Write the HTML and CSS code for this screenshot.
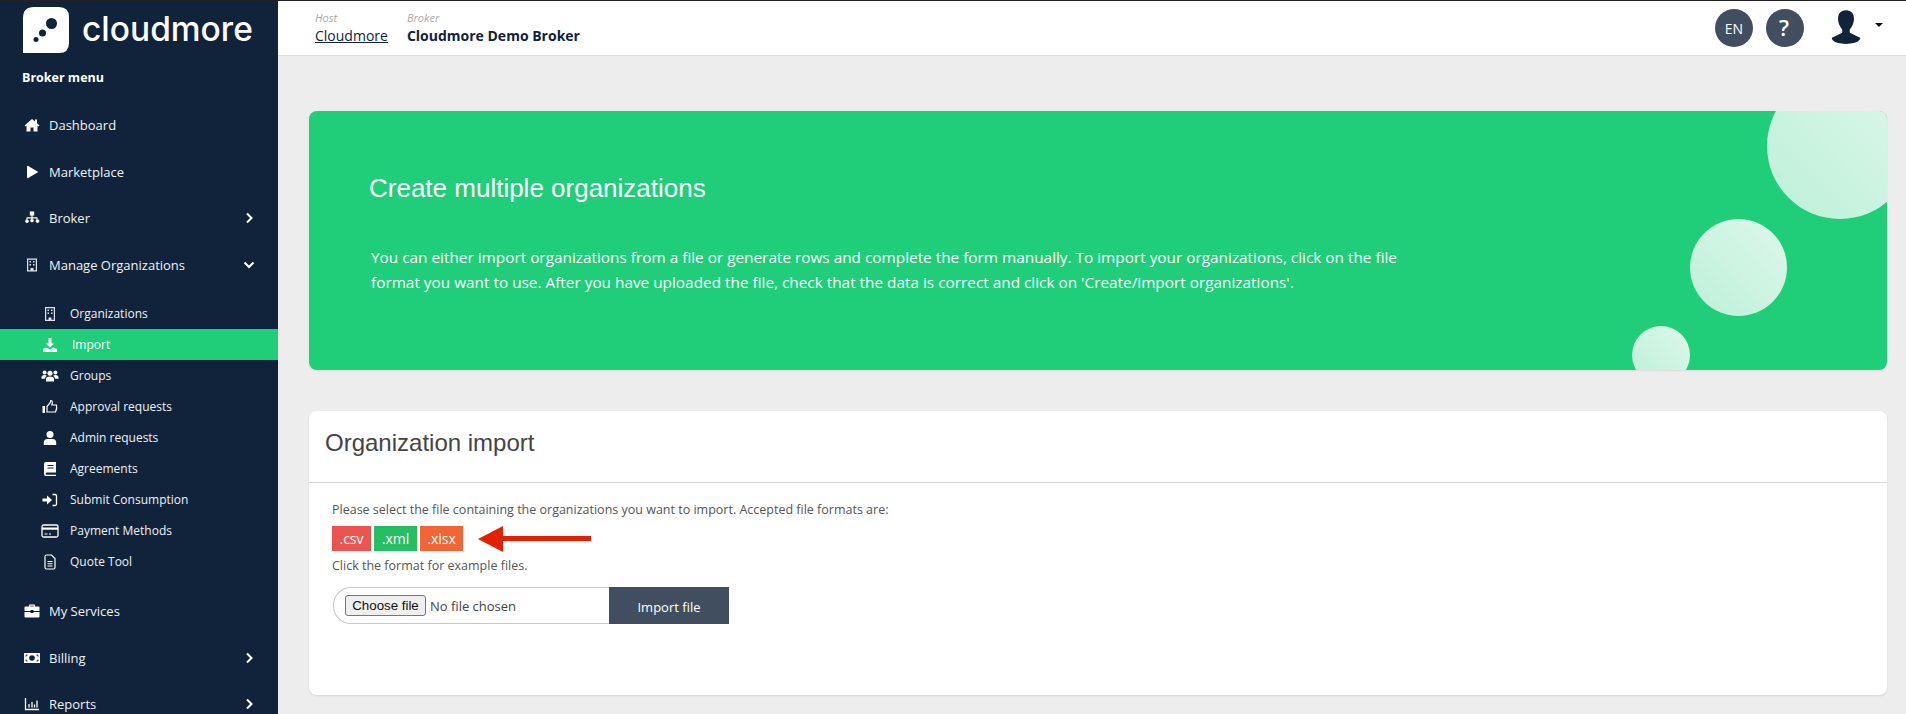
FILE: index.html
```html
<!DOCTYPE html>
<html lang="en">
<head>
<meta charset="utf-8">
<title>Import</title>
<link rel="stylesheet" href="styles.css">
</head>
<body>
<div class="app">
  <aside class="sidebar">
    <div class="brand">
      <svg class="logo-mark" viewBox="0 0 46 46"><path d="M11 0H36Q46 0 46 10V36Q46 46 36 46H0V11Q0 0 11 0Z" fill="#fff"/><circle cx="28.500" cy="16.500" r="5.500" fill="#10233a"/><circle cx="19.500" cy="26" r="3.500" fill="#10233a"/><circle cx="13" cy="32.500" r="2.500" fill="#10233a"/></svg>
      <span class="logo-text">cloudmore</span>
    </div>
    <div class="menu-title">Broker menu</div>
    <nav class="menu">
      <a class="item"><svg class="ic" viewBox="0 0 16 16"><path d="M8 2 0.500 8.500 1.500 9.500 2.500 8.700V14.500H6.500V10.500H9.500V14.500H13.500V8.700L14.500 9.500 15.500 8.500 13 6.300V2.500H11V4.600Z" fill="#fff"/></svg><span>Dashboard</span></a>
      <a class="item"><svg class="ic" viewBox="0 0 16 16"><path d="M3 2.500V13.500a.8.8 0 0 0 1.200.6L13.500 8.600a.7.7 0 0 0 0-1.200L4.200 1.900A.8.8 0 0 0 3 2.500Z" fill="#fff"/></svg><span>Marketplace</span></a>
      <a class="item"><svg class="ic" viewBox="0 0 16 16"><path d="M5.800 1.500H10.200V5.500H8.600V7.300H13.500V9.500H14.500A1.800 1.800 0 1 1 12.500 9.500V8.500H8.600V9.500H9.500A1.800 1.800 0 1 1 6.500 9.500H7.400V8.500H3.500V9.500A1.800 1.800 0 1 1 2.500 9.500V7.300H7.400V5.500H5.800Z" fill="#fff"/></svg><span>Broker</span><svg class="chev" viewBox="0 0 10 12"><path d="M3 1.500 7.500 6 3 10.500" fill="none" stroke="#fff" stroke-width="2"/></svg></a>
      <a class="item"><svg class="ic" viewBox="0 0 16 16"><path d="M3 1.500H13V14.500H3ZM4.200 2.700V13.300H6.500V11H9.500V13.300H11.800V2.700ZM5.500 4H7V5.500H5.500ZM9 4H10.500V5.500H9ZM5.500 7H7V8.500H5.500ZM9 7H10.500V8.500H9Z" fill="#dfe4ea" fill-rule="evenodd"/></svg><span>Manage Organizations</span><svg class="chev" viewBox="0 0 12 12"><path d="M1.500 3.500 6 8l4.500-4.500" fill="none" stroke="#fff" stroke-width="2"/></svg></a>
    </nav>
    <ul class="submenu">
      <li class="sub"><svg class="sic" viewBox="0 0 16 16"><path d="M3 1H13V15H3ZM4.200 2.200V13.800H6.500V11.500H9.500V13.800H11.800V2.200ZM5.500 3.500H7V5H5.500ZM9 3.500H10.500V5H9ZM5.500 6.500H7V8H5.500ZM9 6.500H10.500V8H9Z" fill="#dfe4ea" fill-rule="evenodd"/></svg><span>Organizations</span></li>
      <li class="sub active"><svg class="sic" viewBox="0 0 16 16"><path d="M6.500 1H9.500V6.500H12L8 10.500 4 6.500H6.500ZM1 12 4.500 10.500 8 12.500 11.500 10.500 15 12V15H1Z" fill="#fff"/></svg><span>Import</span></li>
      <li class="sub"><svg class="sic wide" viewBox="0 0 20 14"><circle cx="4" cy="3" r="2.200" fill="#fff"/><circle cx="16" cy="3" r="2.200" fill="#fff"/><circle cx="10" cy="4" r="2.800" fill="#fff"/><path d="M0.500 9Q0.500 6 4 6 6 6 6.500 7 4.500 8 4.500 10H0.500ZM19.500 9Q19.500 6 16 6 14 6 13.500 7 15.500 8 15.500 10H19.500ZM5.500 13V10.500Q5.500 7.500 10 7.500 14.500 7.500 14.500 10.500V13Z" fill="#fff"/></svg><span>Groups</span></li>
      <li class="sub"><svg class="sic" viewBox="0 0 16 16"><path d="M0.500 7H3V14H0.500Z" fill="#fff"/><path d="M5 13V7.500L8 4 8.700 1.500Q10.500 1.500 10.300 3.800L9.800 6H14.500Q15.200 9.500 13.500 13Z" fill="none" stroke="#fff" stroke-width="1.200"/></svg><span>Approval requests</span></li>
      <li class="sub"><svg class="sic" viewBox="0 0 16 16"><circle cx="8" cy="4.500" r="3.500" fill="#fff"/><path d="M1.800 15V12.500Q1.800 9 5.500 9H10.500Q14.200 9 14.200 12.500V15Z" fill="#fff"/></svg><span>Admin requests</span></li>
      <li class="sub"><svg class="sic" viewBox="0 0 16 16"><path d="M4 1H14V11.500H4.500A1.200 1.200 0 0 0 4.500 13.800H14V15H4Q2 15 2 13V3Q2 1 4 1ZM5.500 4V5H11.500V4ZM5.500 6.500V7.500H11.500V6.500Z" fill="#fff" fill-rule="evenodd"/></svg><span>Agreements</span></li>
      <li class="sub"><svg class="sic" viewBox="0 0 16 16"><path d="M0.500 6.500H5V3.500L10 8 5 12.500V9.500H0.500Z" fill="#fff"/><path d="M10.500 2.500H13Q14.500 2.500 14.500 4V12Q14.500 13.500 13 13.500H10.500" fill="none" stroke="#fff" stroke-width="1.300"/></svg><span>Submit Consumption</span></li>
      <li class="sub"><svg class="sic wide" viewBox="0 0 18 14"><rect x="1" y="1" width="16" height="12" rx="1.500" fill="none" stroke="#fff" stroke-width="1.300"/><rect x="1" y="3.500" width="16" height="2.200" fill="#fff"/><path d="M3.500 10H6.500M8 10H10" stroke="#fff" stroke-width="1"/></svg><span>Payment Methods</span></li>
      <li class="sub"><svg class="sic" viewBox="0 0 16 16"><path d="M3 2.500Q3 1 4.500 1H9.500L13 4.500V13.500Q13 15 11.500 15H4.500Q3 15 3 13.500Z" fill="none" stroke="#fff" stroke-width="1.200"/><path d="M5.500 7.500H10.500M5.500 9.800H10.500M5.500 12H10.500" stroke="#fff" stroke-width="1.100"/></svg><span>Quote Tool</span></li>
    </ul>
    <nav class="menu">
      <a class="item"><svg class="ic" viewBox="0 0 16 16"><path d="M5 3.500V2.500Q5 1.500 6 1.500H10Q11 1.500 11 2.500V3.500H14.500Q15.500 3.500 15.500 4.500V8H9.500V7H6.500V8H0.500V4.500Q0.500 3.500 1.500 3.500ZM6.300 3.500H9.700V2.700H6.300ZM0.500 9H6.500V10H9.500V9H15.500V13.500Q15.500 14.500 14.500 14.500H1.500Q0.500 14.500 0.500 13.500Z" fill="#fff" fill-rule="evenodd"/></svg><span>My Services</span></a>
      <a class="item"><svg class="ic" viewBox="0 0 16 12"><path d="M0 1H16V11H0ZM2.500 2.500 1.500 3.500V4.500H2.500V3.500H3.500V2.500ZM12.500 2.500V3.500H13.500V4.500H14.500V3.500L13.500 2.500ZM1.500 7.500V8.500L2.500 9.500H3.500V8.500H2.500V7.500ZM13.500 7.500V8.500H12.500V9.500H13.500L14.500 8.500V7.500ZM8 3.200A2.800 2.800 0 1 0 8 8.800 2.800 2.800 0 1 0 8 3.200Z" fill="#fff" fill-rule="evenodd"/></svg><span>Billing</span><svg class="chev" viewBox="0 0 10 12"><path d="M3 1.500 7.500 6 3 10.500" fill="none" stroke="#fff" stroke-width="2"/></svg></a>
      <a class="item"><svg class="ic" viewBox="0 0 16 16"><path d="M1.500 2V13.500H15" fill="none" stroke="#fff" stroke-width="1.300"/><path d="M5 8V11.500M8 6V11.500M10.500 8.500V11.500M13 4.500V11.500" stroke="#fff" stroke-width="1.300"/></svg><span>Reports</span><svg class="chev" viewBox="0 0 10 12"><path d="M3 1.500 7.500 6 3 10.500" fill="none" stroke="#fff" stroke-width="2"/></svg></a>
    </nav>
  </aside>
  <div class="main">
    <header class="topbar">
      <div class="crumb"><em>Host</em><a class="crumb-link">Cloudmore</a></div>
      <div class="crumb"><em>Broker</em><strong>Cloudmore Demo Broker</strong></div>
      <div class="top-actions">
        <span class="round">EN</span>
        <span class="round q">?</span>
        <span class="user"><svg class="avatar" viewBox="0 0 32 38"><path d="M16 0C10 0 7.500 4 7.500 9.500 7.500 14 9.500 18 12 20.500V24L1 29.500C0 30.500 2.500 36 16 36S32 30.500 31 29.500L20 24V20.500C22.500 18 24.500 14 24.500 9.500 24.500 4 22 0 16 0Z" fill="#10233a"/></svg><i class="caret"></i></span>
      </div>
    </header>
    <main class="content">
      <section class="banner">
        <h1>Create multiple organizations</h1>
        <p>You can either import organizations from a file or generate rows and complete the form manually. To import your organizations, click on the file format you want to use. After you have uploaded the file, check that the data is correct and click on 'Create/import organizations'.</p>
        <span class="bubble b1"></span>
        <span class="bubble b2"></span>
        <span class="bubble b3"></span>
      </section>
      <section class="card">
        <h2>Organization import</h2>
        <div class="card-body">
          <p>Please select the file containing the organizations you want to import. Accepted file formats are:</p>
          <div class="formats">
            <a class="fmt csv">.csv</a><a class="fmt xml">.xml</a><a class="fmt xlsx">.xlsx</a>
            <svg class="arrow" viewBox="0 0 113 26"><path d="M0 13 25 0V10H113V15H25V26Z" fill="#e02200"/></svg>
          </div>
          <p>Click the format for example files.</p>
          <div class="upload">
            <div class="file-box"><button class="file-btn">Choose file</button><span class="file-none">No file chosen</span></div>
            <button class="import-btn">Import file</button>
          </div>
        </div>
      </section>
    </main>
  </div>
</div>
</body>
</html>
```
FILE: styles.css
```css
* { box-sizing: border-box; }
html, body { margin: 0; height: 714px; overflow: hidden; }
body { font-family: "Open Sans", sans-serif; background: #ededed; color: #10233a; }
.app { display: flex; height: 714px; border-top: 1px solid #222; }
.sidebar { width: 278px; flex: none; background: #10233a; color: #fff; overflow: hidden; }
.brand { display: flex; align-items: center; height: 54px; padding-left: 23px; gap: 13px; }
.logo-mark { width: 46px; height: 46px; margin-top: 3px; }
.logo-text { font-family: Inter, sans-serif; font-size: 33.500px; font-weight: 500; margin-top: 1px; }
.menu-title { font-size: 12.500px; font-weight: 700; padding: 14px 0 0 22px; line-height: 18px; height: 47px; }
.menu { display: flex; flex-direction: column; }
.item { display: flex; align-items: center; height: 46.500px; padding: 0 23px 0 24px; font-size: 13px; font-weight: 500; color: #f0f2f5; }
.ic { width: 16px; height: 16px; margin-right: 9px; flex: none; }
.chev { width: 12px; height: 12px; margin-left: auto; }
.submenu { list-style: none; margin: 10px 0 11px; padding: 0; }
.sub { display: flex; align-items: center; height: 31px; padding-left: 42px; font-size: 12px; font-weight: 500; color: #eef1f4; }
.sub .sic { width: 16px; height: 16px; margin-right: 12px; flex: none; }
.sub .sic.wide { width: 18px; margin-left: -1px; margin-right: 11px; }
.sub.active { background: #20ce7a; color: #fff; }
.sub.active .sic { margin-right: 14px; }
.main { flex: 1; min-width: 0; display: flex; flex-direction: column; }
.topbar { height: 55px; background: #fff; border-bottom: 1px solid #ddd; display: flex; align-items: flex-start; padding-left: 37px; gap: 19px; flex: none; }
.crumb { display: flex; flex-direction: column; padding-top: 9px; }
.crumb em { font-size: 11px; line-height: 15px; color: #aaa; }
.crumb-link { font-size: 14px; line-height: 22px; text-decoration: underline; color: #10233a; }
.crumb strong { font-size: 14px; line-height: 22px; font-weight: 700; }
.top-actions { margin-left: auto; display: flex; align-items: center; gap: 13px; height: 54px; padding-right: 23px; }
.round { width: 38px; height: 38px; border-radius: 50%; background: #414e60; color: #fff; display: flex; align-items: center; justify-content: center; font-size: 14px; font-weight: 500; }
.round.q { font-size: 22px; font-weight: 600; padding-right: 2px; padding-bottom: 3px; }
.user { display: flex; align-items: center; margin-left: 14px; }
.avatar { width: 30px; height: 36px; }
.caret { width: 0; height: 0; border-left: 4px solid transparent; border-right: 4px solid transparent; border-top: 4px solid #111; margin: 0 0 6px 14px; }
.content { flex: 1; padding: 55px 19px 0 31px; display: flex; flex-direction: column; gap: 41px; }
.banner { position: relative; overflow: hidden; height: 259px; border-radius: 8px; background: #20ce7a; color: #fff; padding: 61px 0 0 60px; flex: none; box-shadow: 0 1px 2px rgba(0,0,0,.08); }
.banner h1 { margin: 0; font-family: "Liberation Sans", sans-serif; font-size: 26px; font-weight: 400; line-height: 32px; }
.banner p { margin: 41px 0 0 2px; width: 1060px; font-size: 15.350px; line-height: 24.500px; }
.bubble { position: absolute; border-radius: 50%; background: linear-gradient(45deg, rgba(255,255,255,.7), rgba(255,255,255,.85)); }
.b1 { width: 146px; height: 146px; left: 1458px; top: -38px; }
.b2 { width: 97px; height: 97px; left: 1381px; top: 108px; }
.b3 { width: 58px; height: 58px; left: 1323px; top: 215px; }
.card { background: #fff; border-radius: 8px; height: 284px; flex: none; box-shadow: 0 1px 2px rgba(0,0,0,.1); }
.card h2 { margin: 0; height: 72px; padding: 16px 0 0 16px; font-family: "Liberation Sans", sans-serif; font-size: 24px; font-weight: 400; line-height: 32px; color: #444; border-bottom: 1px solid #d5d5d5; }
.card-body { padding: 17px 23px; font-size: 12.500px; color: #555; }
.card-body p { margin: 0; line-height: 20px; }
.formats { display: flex; align-items: center; gap: 3px; margin: 6px 0 5px; height: 25px; }
.fmt { display: flex; align-items: center; justify-content: center; height: 25px; color: #fff; font-size: 14px; }
.csv { width: 39px; background: #ea5451; }
.xml { width: 43px; background: #27bd63; }
.xlsx { width: 43px; background: #f26537; }
.arrow { width: 113px; height: 26px; margin-left: 12px; }
.upload { display: flex; margin: 11px 0 0 1px; height: 37px; }
.file-box { width: 276px; border: 1px solid #c8c8c8; border-right: 0; border-radius: 18px 0 0 18px; display: flex; align-items: center; padding-left: 11px; color: #444; font-size: 13px; }
.file-btn { font-family: "Liberation Sans", sans-serif; font-size: 13.300px; color: #111; background: #efefef; border: 1px solid #767676; border-radius: 3px; width: 81px; height: 21px; line-height: 19px; padding: 0; margin-right: 4px; }
.import-btn { width: 120px; height: 37px; border: 0; padding: 2px 0 0; background: #414e60; color: #fff; font-family: "Open Sans", sans-serif; font-size: 13px; font-weight: 500; }
```
